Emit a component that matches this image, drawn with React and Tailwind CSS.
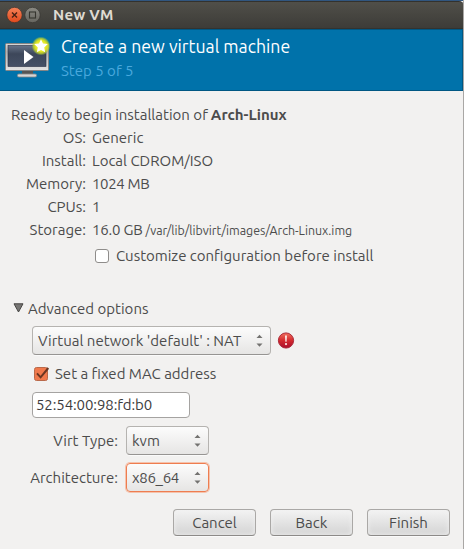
import React from "react";

const font = "font-['Ubuntu','Noto_Sans',sans-serif]";

function Arrows() {
  return (
    <svg width="7" height="13" viewBox="0 0 7 13" className="shrink-0">
      <path d="M0.5 4 3.5 0.8 6.5 4Z" fill="#737270" />
      <path d="M0.5 9.5 3.5 12.7 6.5 9.5Z" fill="#737270" />
    </svg>
  );
}

function Combo({ className, focused, children }) {
  const border = focused
    ? "border-[#ee7d50] shadow-[0_0_0_1px_#f5c3ad]"
    : "border-[#b5b3b0] border-b-[#969492] shadow-[0_1px_0_#fafafa]";
  return (
    <div className={`flex items-center justify-between rounded-[4px] border bg-linear-to-b from-[#fcfcfc] to-[#e6e5e4] pl-[5px] pr-[7px] ${border} ${className}`}>
      {children}
      <Arrows />
    </div>
  );
}

function Button({ children }) {
  return (
    <button className="flex h-[27px] w-[83px] items-center justify-center rounded-[4px] border border-[#aaa8a6] border-b-[#8c8a88] bg-linear-to-b from-[#f3f3f3] to-[#d4d4d4] shadow-[inset_0_0_5px_#f0f0f0,0_1px_0_#fafafa]">
      {children}
    </button>
  );
}

function Row({ label, children }) {
  return (
    <div className="flex h-[23px] items-center">
      <div className="flex w-[86px] justify-end">{label}</div>
      <div className="ml-[6px] flex items-center">{children}</div>
    </div>
  );
}

function MonitorIcon() {
  return (
    <svg width="48" height="44" viewBox="0 0 48 44" className="shrink-0">
      <defs>
        <linearGradient id="frame" x2="0" y2="1">
          <stop offset="0" stopColor="#d8d8d8" />
          <stop offset="0.3" stopColor="#b2b2b2" />
          <stop offset="1" stopColor="#e4e4e4" />
        </linearGradient>
        <linearGradient id="screen" x2="0" y2="1">
          <stop offset="0" stopColor="#687489" />
          <stop offset="0.4" stopColor="#3d475a" />
          <stop offset="1" stopColor="#465166" />
        </linearGradient>
        <radialGradient id="glow">
          <stop offset="0" stopColor="#fbfa72" />
          <stop offset="0.6" stopColor="#dfe51e" />
          <stop offset="0.8" stopColor="#c3d52a" stopOpacity="0.75" />
          <stop offset="1" stopColor="#8fbf40" stopOpacity="0" />
        </radialGradient>
      </defs>
      <path d="M18 35h11v4H18z" fill="#555" />
      <rect x="13.5" y="39" width="19" height="3" rx="1.3" fill="#d6d6d6" stroke="#858585" strokeWidth="0.8" />
      <rect x="1.5" y="8.5" width="43" height="27" rx="1" fill="url(#frame)" stroke="#858585" />
      <rect x="4" y="10.5" width="38" height="21" fill="url(#screen)" stroke="#293044" strokeWidth="0.6" />
      <path d="M20 15v14l9.5-7z" fill="#fff" />
      <circle cx="37" cy="11" r="9.5" fill="url(#glow)" />
      <path d="M37 4.2l2 4.4 4.8.5-3.6 3.3 1 4.9-4.2-2.4-4.2 2.4 1-4.9-3.6-3.3 4.8-.5z" fill="#fff" />
    </svg>
  );
}

export default function App() {
  return (
    <div className={`flex h-[549px] w-[464px] flex-col overflow-hidden border-r border-[#a9a7a5] bg-[#f2f1f0] text-[15px] leading-[20px] whitespace-nowrap text-[#4c4c4c] ${font}`}>
      <div className="-mr-px h-px shrink-0 bg-[#31567f]" />
      <div className="-mr-px flex h-[28px] shrink-0 items-center rounded-tr-[5px] border-t border-b border-t-[#33322e] border-b-[#33332f] bg-linear-to-b from-[#504f49] to-[#3d3c38] pl-[6px]">
        <svg width="36" height="18" viewBox="0 0 36 18">
          <defs>
            <linearGradient id="close" x2="0" y2="1">
              <stop offset="0" stopColor="#f58258" />
              <stop offset="1" stopColor="#e0481b" />
            </linearGradient>
            <linearGradient id="max" x2="0" y2="1">
              <stop offset="0" stopColor="#8b8a83" />
              <stop offset="1" stopColor="#66655f" />
            </linearGradient>
          </defs>
          <circle cx="8.5" cy="9" r="7.7" fill="url(#close)" stroke="#35332f" strokeWidth="0.7" />
          <path d="M6 6.5l5 5m0-5l-5 5" stroke="#462114" strokeWidth="1.4" />
          <circle cx="26.5" cy="9" r="7.7" fill="url(#max)" stroke="#35332f" strokeWidth="0.7" />
          <rect x="23.5" y="6" width="6" height="6" fill="none" stroke="#36352f" strokeWidth="1.1" />
        </svg>
        <span className="ml-[11px] text-[15px] font-bold tracking-[0.3px] text-[#dfdbd2]">New VM</span>
      </div>
      <div className="flex h-[62px] shrink-0 border-r border-b border-t border-[#005783] bg-[#0072aa] pt-[5px] pl-[4px]">
        <MonitorIcon />
        <div className="ml-[9px] flex flex-col pt-px">
          <span className="text-[17.7px] leading-[22px] text-white">Create a new virtual machine</span>
          <span className="mt-[2px] leading-[22px] text-[#4aa9dd]">Step 5 of 5</span>
        </div>
      </div>

      <div className="pt-[12px]">
        <div className="flex h-[23px] items-center pl-[11px]">
          <span>Ready to begin installation of</span>
          <b className="ml-[3px]">Arch-Linux</b>
        </div>
        <Row label={<span>OS:</span>}><span>Generic</span></Row>
        <Row label={<span>Install:</span>}><span>Local CDROM/ISO</span></Row>
        <Row label={<span>Memory:</span>}><span className="tracking-[-0.35px]">1024 MB</span></Row>
        <Row label={<span>CPUs:</span>}><span>1</span></Row>
        <Row label={<span>Storage:</span>}>
          <span className="tracking-[-0.2px]">16.0 GB</span>
          <span className="ml-[3px] text-[12.4px]">/var/lib/libvirt/images/Arch-Linux.img</span>
        </Row>
        <div className="mt-[3px] flex h-[24px] items-center pl-[95px]">
          <span className="size-[14px] rounded-[3px] border border-[#8f8d8b] bg-white" />
          <span className="ml-[7px]">Customize configuration before install</span>
        </div>
      </div>

      <div className="mt-[29px] flex h-[24px] items-center pl-[13px]">
        <svg width="11" height="10" viewBox="0 0 11 10" className="-mt-[3px]">
          <path d="M1 .8h9L5.5 9z" fill="#777674" stroke="#464543" strokeWidth="1" />
        </svg>
        <span className="ml-[4px]">Advanced options</span>
      </div>

      <div className="mt-[5px] flex items-center pl-[32px]">
        <Combo className="h-[29px] w-[239px]"><span>Virtual network 'default' : NAT</span></Combo>
        <svg width="18" height="18" viewBox="0 0 18 18" className="ml-[6px]">
          <defs>
            <linearGradient id="alert" x2="0" y2="1">
              <stop offset="0" stopColor="#f0715f" />
              <stop offset="0.5" stopColor="#d42a2e" />
              <stop offset="1" stopColor="#a90d2c" />
            </linearGradient>
          </defs>
          <circle cx="9" cy="8.5" r="7.6" fill="url(#alert)" stroke="#a51c2c" strokeWidth="0.9" />
          <path d="M8 3.5h2l-.4 6.3H8.4z" fill="#fbe9e6" />
          <circle cx="9" cy="12.1" r="1.1" fill="#fbe9e6" />
        </svg>
      </div>
      <div className="mt-[8px] flex h-[22px] items-center pl-[33px]">
        <svg width="17" height="16" viewBox="0 0 17 16">
          <rect x="1.5" y="1.5" width="13" height="13" rx="2" fill="#f0794c" stroke="#b9694a" />
          <path d="M4 7.3l3.6 4L15.3 2" fill="none" stroke="#6a3622" strokeWidth="2" />
        </svg>
        <span className="ml-[5px]">Set a fixed MAC address</span>
      </div>
      <div className="mt-[7px] ml-[32px] flex h-[26px] w-[158px] items-center rounded-[4px] border border-[#a5a3a1] bg-white pl-[3px] text-[#3c3c3c]">
        <span className="tracking-[-0.1px]">52:54:00:98:fd:b0</span>
      </div>
      <div className="mt-[8px] flex items-center">
        <div className="flex w-[118px] justify-end"><span>Virt Type:</span></div>
        <Combo className="ml-[8px] h-[29px] w-[83px]"><span>kvm</span></Combo>
      </div>
      <div className="mt-[8px] flex items-center">
        <div className="flex w-[118px] justify-end"><span>Architecture:</span></div>
        <Combo className="ml-[8px] h-[29px] w-[83px]" focused><span className="tracking-[-0.3px]">x86_64</span></Combo>
      </div>
      <div className="mt-[17px] flex gap-[14px] pl-[173px]">
        <Button><span>Cancel</span></Button>
        <Button><span>Back</span></Button>
        <Button><span>Finish</span></Button>
      </div>
    </div>
  );
}
